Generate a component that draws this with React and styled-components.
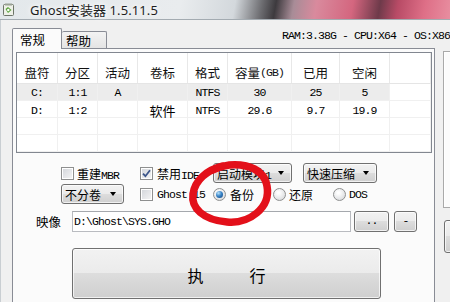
import React from 'react';
import styled, { createGlobalStyle, css } from 'styled-components';

const GlobalStyle = createGlobalStyle`
  html, body { margin: 0; padding: 0; background: #f0f0f0; }
  body { width: 450px; height: 302px; overflow: hidden; }
  * { box-sizing: border-box; }
`;

const cjk = `"Noto Sans CJK SC", "Noto Sans", sans-serif`;

const Window = styled.div`
  position: relative;
  width: 450px;
  height: 302px;
  overflow: hidden;
  display: flex;
  flex-direction: column;
  background: #f0f0f0;
  font-family: ${cjk};
  font-size: 12px;
  color: #000;
`;

const TitleBar = styled.div`
  height: 20px;
  flex-shrink: 0;
  display: flex;
  align-items: center;
  gap: 15px;
  padding: 0 0 1px 3px;
  border-bottom: 1px solid #a3abb1;
  background: linear-gradient(100deg, #e3e8eb 0%, #e9ecee 40%, #d3d8dc 52%, #6c6c70 58%, #3d3a3e 61%, #a88c97 65%, #d98a9d 70%, #d4667f 78%, #6e3a4a 84%, #b84b66 88%, #de6f87 94%, #e88ea0 100%);
`;

const Title = styled.span`
  font-family: "Noto Sans", "Noto Sans CJK SC", sans-serif;
  font-size: 13px;
  color: #1e1e1e;
  letter-spacing: 0.1px;
  text-shadow: 0 0 4px #fff, 0 0 8px #fff;
`;

const Body = styled.div`
  flex: 1;
  display: flex;
  flex-direction: column;
  padding-left: 12px;
  min-height: 0;
  border-left: 1px solid #c9ced2;
`;

const HeaderRow = styled.div`
  height: 28px;
  flex-shrink: 0;
  display: flex;
  align-items: flex-end;
  margin-left: -1px;
`;

const Tab = styled.div`
  display: flex;
  align-items: center;
  padding-left: 7px;
  font-size: 12.5px;
  border: 1px solid #898c95;
  border-bottom: none;
  border-radius: 2px 2px 0 0;
  ${p => p.$active ? css`
    width: 50px;
    height: 21px;
    margin-bottom: -1px;
    background: #fbfbfb;
    position: relative;
    z-index: 1;
  ` : css`
    width: 45px;
    height: 17px;
    padding-left: 4px;
    border-left: none;
    background: linear-gradient(#f3f3f3, #e4e4e4);
  `}
`;

const Asc = styled.span`
  font-family: "Liberation Mono", monospace;
  font-size: 11.5px;
  letter-spacing: -0.9px;
`;

const SysInfo = styled(Asc)`
  align-self: flex-start;
  margin: 10px 0 0 175px;
  line-height: 12px;
  white-space: nowrap;
  flex-shrink: 0;
`;

const ContentRow = styled.div`
  flex: 1;
  display: flex;
  gap: 8px;
  min-height: 0;
  margin-left: -1px;
`;

const Panel = styled.div`
  width: 423px;
  flex-shrink: 0;
  border: 1px solid #898c95;
  border-bottom: none;
  background: #fbfbfb;
  padding: 3px 2px 0 3px;
  display: flex;
  flex-direction: column;
`;

const List = styled.div`
  height: 101px;
  border: 1px solid #828790;
  background: #fff;
  overflow: hidden;
`;

const cols = '41px 40px 40px 50px 40px 64px 48px 50px 1fr';

const HeadRow = styled.div`
  display: grid;
  grid-template-columns: ${cols};
  height: 31px;
  border-bottom: 1px solid #e5e5e5;
`;

const HeadCell = styled.div`
  display: flex;
  align-items: flex-end;
  justify-content: center;
  line-height: 20px;
  padding-bottom: 0;
  font-size: 12.5px;
  color: #111;
  border-right: 1px solid #e8e8e8;
`;

const DataRow = styled.div`
  display: grid;
  grid-template-columns: ${cols};
  height: 17px;
  border-bottom: 1px solid #f0f0f0;
`;

const DataCell = styled.div`
  display: flex;
  align-items: center;
  justify-content: center;
  border-right: 1px solid #f0f0f0;
  background: ${p => (p.$sel ? '#ececec' : 'transparent')};
`;

const Options = styled.div`
  display: flex;
  flex-direction: column;
`;

const OptRow = styled.div`
  display: flex;
  align-items: center;
  height: 20px;
  padding-left: ${p => p.$indent}px;
  margin-top: ${p => p.$top}px;
`;

const Item = styled.label`
  display: flex;
  align-items: center;
  gap: ${p => p.$gap ?? 4}px;
  width: ${p => p.$w}px;
  flex-shrink: 0;
  white-space: nowrap;
`;

const CheckBox = styled.span`
  width: 13px;
  height: 13px;
  flex-shrink: 0;
  display: flex;
  align-items: center;
  justify-content: center;
  border: 1px solid #8e8f8f;
  background: linear-gradient(135deg, #d2d5da, #f6f6f6);
  box-shadow: inset 0 0 0 1px #fff;
`;

const Radio = styled.span`
  width: 13px;
  height: 13px;
  flex-shrink: 0;
  border-radius: 50%;
  display: flex;
  align-items: center;
  justify-content: center;
  border: 1px solid #8e8f8f;
  background: radial-gradient(circle at 40% 35%, #ffffff 10%, #d5d7da 90%);
`;

const Dot = styled.span`
  width: 7px;
  height: 7px;
  border-radius: 50%;
  background: radial-gradient(circle at 35% 30%, #b9e2fb 0%, #3b86c9 45%, #0d3e78 100%);
`;

const winBtn = css`
  border: 1px solid #707070;
  border-radius: 3px;
  background: linear-gradient(#f2f2f2 0%, #ebebeb 49%, #dddddd 50%, #cfcfcf 100%);
  box-shadow: inset 0 0 0 1px rgba(255, 255, 255, 0.7);
`;

const Select = styled.div`
  ${winBtn}
  width: ${p => p.$w}px;
  height: 20px;
  flex-shrink: 0;
  margin-right: ${p => p.$mr ?? 0}px;
  display: flex;
  align-items: center;
  justify-content: space-between;
  padding: 0 7px 0 3px;
  white-space: nowrap;
  font-size: 12px;
  &::after {
    content: '';
    border-left: 3.5px solid transparent;
    border-right: 3.5px solid transparent;
    border-top: 4px solid #000;
  }
`;

const ImageRow = styled.div`
  display: flex;
  align-items: center;
  height: 21px;
  margin-top: 7px;
  padding-left: 20px;
`;

const FieldLabel = styled.span`
  width: 36px;
  font-size: 12.5px;
`;

const PathInput = styled.div`
  width: 279px;
  height: 21px;
  border: 1px solid #b9bbc0;
  border-top-color: #a5a8ad;
  background: #fff;
  display: flex;
  align-items: center;
  padding-left: 1px;
`;

const SmallButton = styled.div`
  ${winBtn}
  width: ${p => p.$w}px;
  height: 21px;
  margin-left: ${p => p.$ml}px;
  display: flex;
  align-items: center;
  justify-content: center;
  padding-bottom: 2px;
`;

const RunButton = styled.div`
  ${winBtn}
  width: 309px;
  height: 51px;
  margin: 16px 0 0 56px;
  display: flex;
  align-items: center;
  justify-content: center;
  gap: 46px;
  font-size: 16px;
  padding-top: 2px;
`;

const SideCol = styled.div`
  flex: 1;
  display: flex;
  flex-direction: column;
  padding-top: 3px;
`;

const SideBox = styled.div`
  height: 157px;
  border: 1px solid #a9a9a9;
  border-right: none;
  background: #fbfbfb;
  box-shadow: inset 1px 1px 0 #fff;
`;

const SideButton = styled.div`
  ${winBtn}
  height: 33px;
  margin: 12px -4px 0 1px;
`;

const Circle = styled.svg`
  position: absolute;
  left: 183px;
  top: 156px;
  pointer-events: none;
`;

const AppIcon = () => (
  <svg width="12" height="13" viewBox="0 0 12 13">
    <rect x="0.5" y="1.5" width="10" height="11" rx="1" fill="#eef1e8" stroke="#6d7468" />
    <rect x="2" y="0.5" width="7" height="2" fill="#9aa295" />
    <path d="M2.5 6 L5 4 L8.5 7 L5 10 Z" fill="#5aa43c" />
    <circle cx="5.3" cy="7" r="1.2" fill="#fff" />
  </svg>
);

const Check = () => (
  <svg width="9" height="9" viewBox="0 0 9 9">
    <path d="M1 4.6 L3.4 7.2 L8 1.2" fill="none" stroke="#3d568a" strokeWidth="1.8" />
  </svg>
);

const header = ['盘符', '分区', '活动', '卷标', '格式', '容量', '已用', '空闲', ''];
const rows = [
  { sel: true, cells: ['C:', '1:1', 'A', '', 'NTFS', '30', '25', '5'] },
  { sel: false, cells: ['D:', '1:2', '', '软件', 'NTFS', '29.6', '9.7', '19.9'] },
  { sel: false, cells: ['', '', '', '', '', '', '', ''] },
  { sel: false, cells: ['', '', '', '', '', '', '', ''] },
];

const isCjk = s => /[\u4e00-\u9fff]/.test(s);

export default function App() {
  return (
    <>
      <GlobalStyle />
      <Window>
        <TitleBar>
          <AppIcon />
          <Title>Ghost安装器 1.5.11.5</Title>
        </TitleBar>
        <Body>
          <HeaderRow>
            <Tab $active>常规</Tab>
            <Tab>帮助</Tab>
            <SysInfo>RAM:3.38G - CPU:X64 - OS:X86</SysInfo>
          </HeaderRow>
          <ContentRow>
            <Panel>
              <List>
                <HeadRow>
                  {header.map((h, i) => (
                    <HeadCell key={i}>
                      {h}
                      {h === '容量' && <Asc>(GB)</Asc>}
                    </HeadCell>
                  ))}
                </HeadRow>
                {rows.map((r, ri) => (
                  <DataRow key={ri}>
                    {r.cells.map((c, ci) => (
                      <DataCell key={ci} $sel={r.sel}>
                        {isCjk(c) ? <span style={{ fontSize: 13 }}>{c}</span> : <Asc>{c}</Asc>}
                      </DataCell>
                    ))}
                    <DataCell />
                  </DataRow>
                ))}
              </List>
              <Options>
                <OptRow $indent={45} $top={10}>
                  <Item $w={79} $gap={3}>
                    <CheckBox />
                    <span>重建<Asc>MBR</Asc></span>
                  </Item>
                  <Item $w={73} $gap={4}>
                    <CheckBox><Check /></CheckBox>
                    <span>禁用<Asc>IDE</Asc></span>
                  </Item>
                  <Select $w={79} $mr={11}><span>启动模块<Asc>1</Asc></span></Select>
                  <Select $w={74}>快速压缩</Select>
                </OptRow>
                <OptRow $indent={45} $top={1}>
                  <Select $w={63} $mr={16}>不分卷</Select>
                  <Item $w={73} $gap={4}>
                    <CheckBox />
                    <Asc>Ghost 15</Asc>
                  </Item>
                  <Item $w={60} $gap={4}>
                    <Radio><Dot /></Radio>
                    <span>备份</span>
                  </Item>
                  <Item $w={60} $gap={3}>
                    <Radio />
                    <span>还原</span>
                  </Item>
                  <Item $w={50} $gap={3}>
                    <Radio />
                    <Asc>DOS</Asc>
                  </Item>
                </OptRow>
                <ImageRow>
                  <FieldLabel>映像</FieldLabel>
                  <PathInput><Asc>D:\Ghost\SYS.GHO</Asc></PathInput>
                  <SmallButton $w={35} $ml={3}><Asc>..</Asc></SmallButton>
                  <SmallButton $w={23} $ml={5}><Asc>-</Asc></SmallButton>
                </ImageRow>
                <RunButton>
                  <span>执</span>
                  <span>行</span>
                </RunButton>
              </Options>
            </Panel>
            <SideCol>
              <SideBox />
              <SideButton />
            </SideCol>
          </ContentRow>
        </Body>
        <Circle width="96" height="76" viewBox="0 0 96 76">
          <path
            d="M30 14 C50 4 80 8 84 30 C88 52 66 68 44 66 C20 64 8 52 10 38 C12 24 24 14 40 10"
            fill="none"
            stroke="#e3101a"
            strokeWidth="7.5"
            strokeLinecap="round"
          />
        </Circle>
      </Window>
    </>
  );
}
